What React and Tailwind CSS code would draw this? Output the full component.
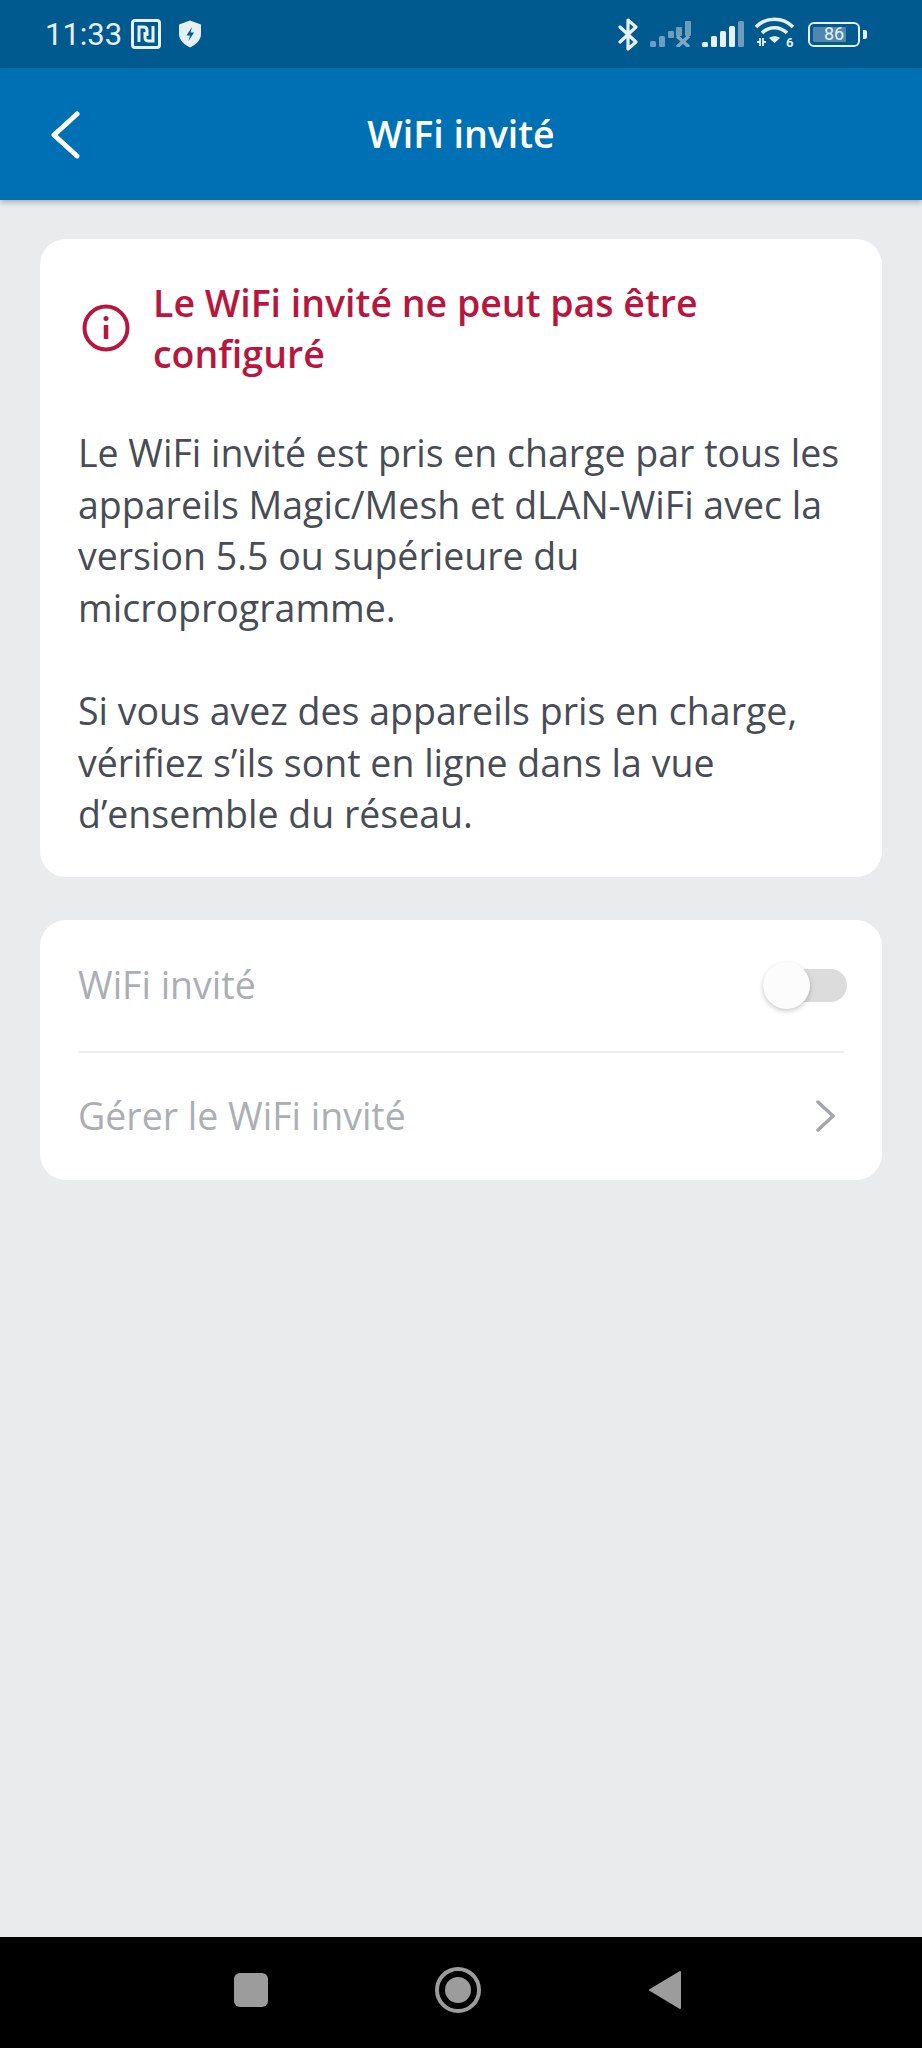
const OPEN_SANS = "font-['Open_Sans',sans-serif]";

function NfcIcon() {
  return (
    <svg width="30" height="30" viewBox="0 0 30 30" fill="none" stroke="#e6f0f7" strokeWidth="3">
      <rect x="1.500" y="1.500" width="27" height="27" rx="2.500" />
      <path d="M8 23V8h4.500c2.200 0 3.500 1.300 3.500 3.500V17" />
      <path d="M22 7v15h-4.500c-2.200 0-3.500-1.300-3.500-3.500V13" />
    </svg>
  );
}

function ShieldIcon() {
  return (
    <svg width="24" height="28" viewBox="0 0 24 28">
      <path d="M12 .5l11 4v9.500c0 6-5 10.500-11 13.500C6 24.500 1 20 1 14V4.500z" fill="#e6f0f7" />
      <path d="M14 7l-5.500 8.500h3.500L10.500 21l5.500-8.500h-3.500z" fill="#005a90" />
    </svg>
  );
}

function BluetoothIcon() {
  return (
    <svg width="20" height="33" viewBox="0 0 20 33" fill="none" stroke="#e6f0f7" strokeWidth="3.200">
      <path d="M2 9l16 15-8 7V2l8 7L2 24" strokeLinejoin="round" strokeLinecap="round" />
    </svg>
  );
}

function SignalBars({ fills }) {
  const heights = [5, 11, 16, 21, 26];
  return (
    <div className="flex items-end gap-[3px] h-[26px]">
      {heights.map((h, i) => (
        <div key={i} className="w-[6px] rounded-[1.500px]" style={{ height: h, background: fills[i] }} />
      ))}
    </div>
  );
}

function SimOffIcon() {
  return (
    <svg width="41" height="26" viewBox="0 0 41 26" fill="#6f9dbd">
      <rect x="0" y="20" width="6" height="6" rx="1.500" />
      <rect x="9" y="15" width="6" height="11" rx="1.500" />
      <rect x="18" y="10" width="6" height="7" rx="1" />
      <rect x="26" y="6" width="6" height="9" rx="1" />
      <rect x="35" y="0" width="6" height="15" rx="1" />
      <path d="M27 15l12 11M39 15L27 26" stroke="#7ea8c4" strokeWidth="3.500" fill="none" />
    </svg>
  );
}

function WifiIcon() {
  return (
    <svg width="41" height="34" viewBox="0 0 41 34" fill="none" stroke="#e6f0f7" strokeWidth="3.500">
      <path d="M2 10c10-10.500 27-10.500 37 0" />
      <path d="M8 16c7-7 18-7 25 0" />
      <path d="M20.500 26l-5.500-5c3-2.500 8-2.500 11 0z" fill="#e6f0f7" stroke="none" />
      <path d="M3 25h3.500M6 21v8M9 21v8M9 25h3" strokeWidth="1.800" />
      <text x="32" y="30" fontSize="13" fontWeight="700" fill="#e6f0f7" stroke="none" fontFamily="Roboto, sans-serif">6</text>
    </svg>
  );
}

function BatteryIcon() {
  return (
    <div className="flex items-center gap-[3px]">
      <div className="relative w-[52px] h-[25px] rounded-[6px] border-[2.500px] border-[#e6f0f7] flex items-center justify-center">
        <div className="absolute left-[3px] top-[3px] bottom-[3px] w-[33px] bg-[#4f87ad] rounded-[1px]" />
        <span className="relative text-[18px] leading-none font-['Roboto',sans-serif] text-[#e6f0f7]">86</span>
      </div>
      <div className="w-[4px] h-[9px] bg-[#e6f0f7] rounded-r-[2px]" />
    </div>
  );
}

function StatusBar() {
  return (
    <div className="h-[68px] bg-[#005a90] flex items-center justify-between pl-[45px] pr-[55px]">
      <div className="flex items-center">
        <span className="text-[31px] font-['Roboto',sans-serif] text-[#e6f0f7] leading-none">11:33</span>
        <div className="ml-[9px] flex"><NfcIcon /></div>
        <div className="ml-[17px] flex"><ShieldIcon /></div>
      </div>
      <div className="flex items-center">
        <BluetoothIcon />
        <div className="ml-[12px] flex"><SimOffIcon /></div>
        <div className="ml-[11px]">
          <SignalBars fills={['#e6f0f7', '#e6f0f7', '#e6f0f7', '#e6f0f7', '#6f9dbd']} />
        </div>
        <div className="ml-[10px] flex"><WifiIcon /></div>
        <div className="ml-[13px]"><BatteryIcon /></div>
      </div>
    </div>
  );
}

function AppBar() {
  return (
    <header className="relative h-[132px] bg-[#0070b5] flex items-center justify-center shadow-[0_2px_6px_rgba(0,0,0,0.3)]">
      <svg className="absolute left-[51px] top-[43px]" width="29" height="48" viewBox="0 0 29 48" fill="none" stroke="#fff" strokeWidth="5" strokeLinecap="round" strokeLinejoin="round">
        <path d="M26 3L3 24l23 21" />
      </svg>
      <h1 className={`${OPEN_SANS} text-[37.500px] font-semibold text-white`}>WiFi invité</h1>
    </header>
  );
}

function InfoCard() {
  return (
    <section className="bg-white rounded-[26px] pl-[38px] pr-[36px] pt-[38px] pb-[37px]">
      <div className="flex items-center gap-[23px] pl-[4px]">
        <svg className="shrink-0" width="48" height="48" viewBox="0 0 48 48" fill="none" stroke="#b7173f">
          <circle cx="24" cy="24" r="21.500" strokeWidth="4" />
          <circle cx="24" cy="14.500" r="2.500" fill="#b7173f" stroke="none" />
          <path d="M24 21v14" strokeWidth="4.500" />
        </svg>
        <h2 className={`${OPEN_SANS} text-[37.500px] leading-[51px] font-semibold text-[#b7173f]`}>
          Le WiFi invité ne peut pas être configuré
        </h2>
      </div>
      <div className={`${OPEN_SANS} mt-[48px] text-[37.500px] leading-[51.600px] text-[#474c55]`}>
        <p>Le WiFi invité est pris en charge par tous les appareils Magic/Mesh et dLAN-WiFi avec la version 5.5 ou supérieure du microprogramme.</p>
        <p className="mt-[51.600px]">Si vous avez des appareils pris en charge, vérifiez s’ils sont en ligne dans la vue d’ensemble du réseau.</p>
      </div>
    </section>
  );
}

function SettingsCard() {
  return (
    <section className={`${OPEN_SANS} bg-white rounded-[26px] mt-[43px] text-[37.500px] text-[#abafb5]`}>
      <div className="h-[133px] mx-[38px] flex items-center justify-between border-b-2 border-[#eceef0]">
        <span>WiFi invité</span>
        <div className="relative w-[84px] h-[33px] mr-[-3px] rounded-full bg-[#dcdcdc]">
          <div className="absolute left-0 top-[-7px] w-[47px] h-[47px] rounded-full bg-[#fcfcfc] shadow-[0_2px_5px_rgba(0,0,0,0.22)]" />
        </div>
      </div>
      <div className="h-[127px] mx-[38px] flex items-center justify-between">
        <span>Gérer le WiFi invité</span>
        <svg className="mr-[8px]" width="20" height="32" viewBox="0 0 20 32" fill="none" stroke="#a3a6aa" strokeWidth="3.500" strokeLinecap="round">
          <path d="M2 2l15 14L2 30" />
        </svg>
      </div>
    </section>
  );
}

function NavBar() {
  return (
    <div className="h-[111px] bg-black flex items-center justify-center pb-[5px] pr-[6px]">
      <div className="w-[34px] h-[34px] rounded-[6px] bg-[#9c9c9c]" />
      <div className="ml-[167px] w-[46px] h-[46px] rounded-full border-[4px] border-[#9c9c9c] flex items-center justify-center">
        <div className="w-[26px] h-[26px] rounded-full bg-[#9c9c9c]" />
      </div>
      <svg className="ml-[167px]" width="34" height="40" viewBox="0 0 34 40">
        <path d="M32 2v36L2 20z" fill="#9c9c9c" stroke="#9c9c9c" strokeWidth="2" strokeLinejoin="round" />
      </svg>
    </div>
  );
}

export default function App() {
  return (
    <div className="w-[922px] h-[2048px] flex flex-col bg-[#e9ebed] overflow-hidden">
      <StatusBar />
      <AppBar />
      <main className="flex-1 px-[40px] pt-[39px]">
        <InfoCard />
        <SettingsCard />
      </main>
      <NavBar />
    </div>
  );
}
